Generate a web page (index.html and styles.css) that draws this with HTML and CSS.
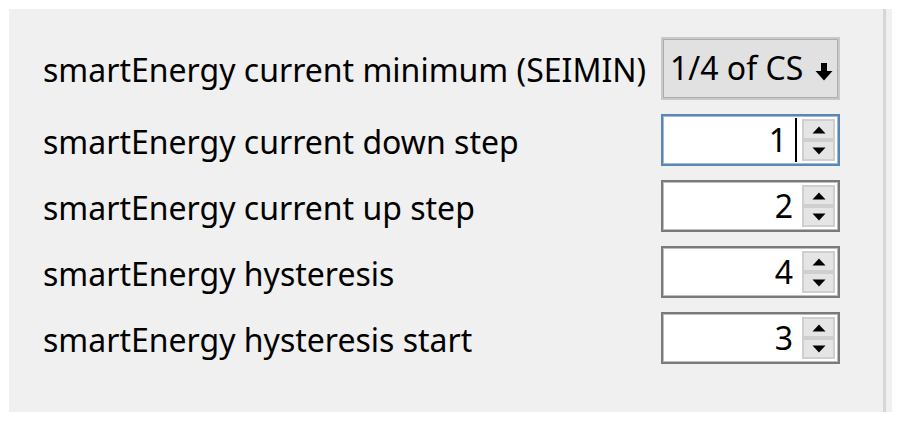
FILE: index.html
```html
<!DOCTYPE html>
<html>
<head>
<meta charset="utf-8">
<link rel="stylesheet" href="styles.css">
</head>
<body>
<div class="panel">
  <div class="content">
    <div class="form">
      <div class="label">smartEnergy current minimum (SEIMIN)</div>
      <div class="combo">
        <span class="combo-text">1/4 of CS</span>
        <svg class="combo-arrow" width="18" height="19" viewBox="0 0 18 19"><path d="M6 1h6v8h5.5L9 18.5 0.5 9H6z" fill="#000"/></svg>
      </div>

      <div class="label">smartEnergy current down step</div>
      <div class="spin focused">
        <div class="spin-field"><span class="num">1</span><span class="caret"></span></div>
        <div class="spin-btns">
          <div class="spin-btn"><svg width="14" height="8" viewBox="0 0 14 8"><path d="M7 0.5L13.5 7.5H0.5z" fill="#000"/></svg></div>
          <div class="spin-btn"><svg width="14" height="8" viewBox="0 0 14 8"><path d="M0.5 0.5H13.5L7 7.5z" fill="#000"/></svg></div>
        </div>
      </div>

      <div class="label">smartEnergy current up step</div>
      <div class="spin">
        <div class="spin-field"><span class="num">2</span></div>
        <div class="spin-btns">
          <div class="spin-btn"><svg width="14" height="8" viewBox="0 0 14 8"><path d="M7 0.5L13.5 7.5H0.5z" fill="#000"/></svg></div>
          <div class="spin-btn"><svg width="14" height="8" viewBox="0 0 14 8"><path d="M0.5 0.5H13.5L7 7.5z" fill="#000"/></svg></div>
        </div>
      </div>

      <div class="label">smartEnergy hysteresis</div>
      <div class="spin">
        <div class="spin-field"><span class="num">4</span></div>
        <div class="spin-btns">
          <div class="spin-btn"><svg width="14" height="8" viewBox="0 0 14 8"><path d="M7 0.5L13.5 7.5H0.5z" fill="#000"/></svg></div>
          <div class="spin-btn"><svg width="14" height="8" viewBox="0 0 14 8"><path d="M0.5 0.5H13.5L7 7.5z" fill="#000"/></svg></div>
        </div>
      </div>

      <div class="label">smartEnergy hysteresis start</div>
      <div class="spin">
        <div class="spin-field"><span class="num">3</span></div>
        <div class="spin-btns">
          <div class="spin-btn"><svg width="14" height="8" viewBox="0 0 14 8"><path d="M7 0.5L13.5 7.5H0.5z" fill="#000"/></svg></div>
          <div class="spin-btn"><svg width="14" height="8" viewBox="0 0 14 8"><path d="M0.5 0.5H13.5L7 7.5z" fill="#000"/></svg></div>
        </div>
      </div>
    </div>
  </div>
  <div class="sep"></div>
  <div class="strip"></div>
</div>
</body>
</html>
```
FILE: styles.css
```css
html, body {
  margin: 0;
  padding: 0;
  background: #ffffff;
}
body {
  padding: 9px 8px 9px 9px;
  font-family: "Noto Sans", "Open Sans", sans-serif;
  color: #000;
}
.panel {
  display: flex;
  width: 883px;
  height: 403px;
  background: #f0f0f0;
}
.content {
  flex: 1;
  padding: 28px 43px 0 34px;
}
.form {
  display: grid;
  grid-template-columns: 1fr 179px;
  grid-template-rows: 63px 52px 52px 52px 52px;
  row-gap: 14px;
}
.label {
  display: flex;
  align-items: center;
  font-size: 32px;
  white-space: nowrap;
  padding-top: 2px;
}
.combo {
  display: flex;
  align-items: center;
  justify-content: space-between;
  background: #e1e1e1;
  border: 2px solid #c9c9c9;
  box-shadow: inset 0 0 0 1px #adadad;
  padding: 0 5px 0 7px;
  box-sizing: border-box;
  font-size: 32px;
}
.combo-text {
  padding-bottom: 3px;
}
.combo-arrow {
  margin-top: 6px;
}
.spin {
  display: flex;
  background: #ffffff;
  border: 2px solid #7a7a7a;
  box-shadow: inset 0 0 0 1px #bdbdbd;
  box-sizing: border-box;
  padding: 3px;
}
.spin.focused {
  border-color: #5a86b4;
  box-shadow: inset 0 0 0 1px #9ebbd8;
}
.spin-field {
  flex: 1;
  display: flex;
  align-items: center;
  justify-content: flex-end;
  font-size: 32px;
  padding-right: 9px;
}
.num {
  padding-bottom: 2px;
}
.caret {
  display: inline-block;
  width: 2px;
  height: 44px;
  background: #000;
  margin-left: 8px;
  margin-right: -4px;
}
.spin-btns {
  display: flex;
  flex-direction: column;
  width: 33px;
}
.spin-btn {
  flex: 1;
  display: flex;
  align-items: center;
  justify-content: center;
  background: #e5e5e5;
  border: 2px solid #cfcfcf;
  box-sizing: border-box;
}
.sep {
  width: 3px;
  background: #d6d6d6;
}
.strip {
  width: 6px;
}
```
